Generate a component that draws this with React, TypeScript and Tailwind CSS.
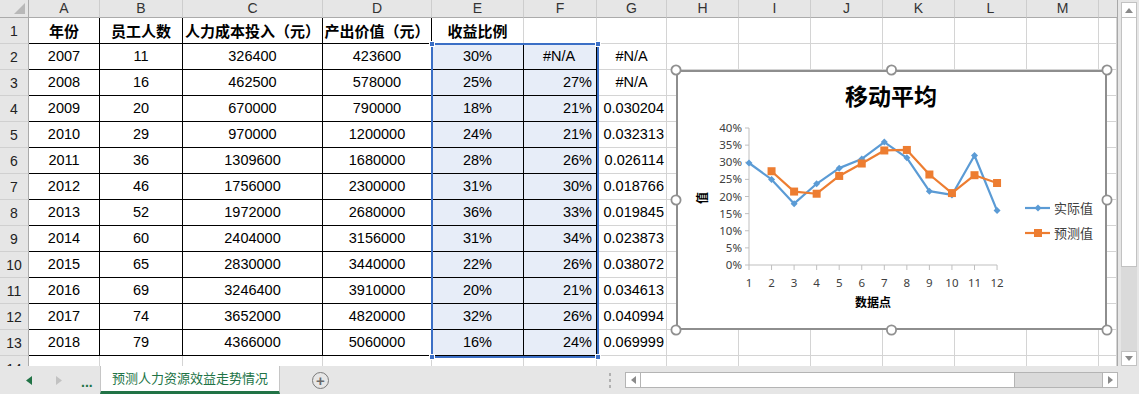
import React from 'react';

const COLS = ['A', 'B', 'C', 'D', 'E', 'F', 'G', 'H', 'I', 'J', 'K', 'L', 'M'];
const HEAD = ['年份', '员工人数', '人力成本投入（元）', '产出价值（元）', '收益比例', '', ''];

const ROWS: string[][] = [
  ['2007', '11', '326400', '423600', '30%', '#N/A', '#N/A'],
  ['2008', '16', '462500', '578000', '25%', '27%', '#N/A'],
  ['2009', '20', '670000', '790000', '18%', '21%', '0.030204'],
  ['2010', '29', '970000', '1200000', '24%', '21%', '0.032313'],
  ['2011', '36', '1309600', '1680000', '28%', '26%', '0.026114'],
  ['2012', '46', '1756000', '2300000', '31%', '30%', '0.018766'],
  ['2013', '52', '1972000', '2680000', '36%', '33%', '0.019845'],
  ['2014', '60', '2404000', '3156000', '31%', '34%', '0.023873'],
  ['2015', '65', '2830000', '3440000', '22%', '26%', '0.038072'],
  ['2016', '69', '3246400', '3910000', '20%', '21%', '0.034613'],
  ['2017', '74', '3652000', '4820000', '32%', '26%', '0.040994'],
  ['2018', '79', '4366000', '5060000', '16%', '24%', '0.069999'],
];

const actual = [0.2978, 0.2497, 0.1791, 0.2371, 0.2828, 0.3098, 0.359, 0.3128, 0.2155, 0.2045, 0.3198, 0.159];
const forecast = [0.2738, 0.2144, 0.2081, 0.26, 0.2963, 0.3344, 0.3359, 0.2642, 0.21, 0.2622, 0.2394];

const cellFont = { fontFamily: "'Liberation Sans', 'Noto Sans CJK SC', sans-serif" };
const cjk = "'Noto Sans', 'Noto Sans CJK SC', sans-serif";

function Chart() {
  const px = (i: number) => 73 + i * 22.55;
  const py = (v: number) => 195 - v * 342.5;
  const aPts = actual.map((v, i) => `${px(i)},${py(v)}`).join(' ');
  const fPts = forecast.map((v, i) => `${px(i + 1)},${py(v)}`).join(' ');
  const handles = [
    [0, 0], [215.5, 0], [431, 0],
    [0, 130], [431, 130],
    [0, 260], [215.5, 260], [431, 260],
  ];
  return (
    <div className="absolute left-[670px] top-[64px] w-[443px] h-[272px]">
      <svg width={443} height={272} style={{ fontFamily: cjk }}>
        <g transform="translate(6,6)">
          <rect x={1} y={1} width={429} height={258} fill="#fff" stroke="#8e8e8e" strokeWidth={2} />
          <text x={215} y={35} textAnchor="middle" fontSize={23} fontWeight={700} fill="#000">移动平均</text>

          {/* y axis */}
          <line x1={73} y1={58} x2={73} y2={195} stroke="#bfbfbf" />
          {[0, 5, 10, 15, 20, 25, 30, 35, 40].map(p => (
            <g key={p}>
              <line x1={69} y1={py(p / 100)} x2={73} y2={py(p / 100)} stroke="#bfbfbf" />
              <text x={66} y={py(p / 100) + 4} textAnchor="end" fontSize={11.5} fill="#404040">{p}%</text>
            </g>
          ))}

          {/* x axis */}
          <line x1={73} y1={195} x2={px(11)} y2={195} stroke="#bfbfbf" />
          {actual.map((_, i) => (
            <g key={i}>
              <line x1={px(i)} y1={195} x2={px(i)} y2={200} stroke="#bfbfbf" />
              <text x={px(i)} y={217} textAnchor="middle" fontSize={11.5} fill="#404040">{i + 1}</text>
            </g>
          ))}
          <text x={197} y={237} textAnchor="middle" fontSize={12} fontWeight={700} fill="#000">数据点</text>
          <text x={0} y={0} transform="translate(31,128) rotate(-90)" textAnchor="middle" fontSize={12} fontWeight={700} fill="#000">值</text>

          {/* series */}
          <polyline points={aPts} fill="none" stroke="#5b9bd5" strokeWidth={2.2} strokeLinejoin="round" />
          {actual.map((v, i) => (
            <polygon key={i} points={`${px(i)},${py(v) - 3.5} ${px(i) + 3.5},${py(v)} ${px(i)},${py(v) + 3.5} ${px(i) - 3.5},${py(v)}`} fill="#5b9bd5" />
          ))}
          <polyline points={fPts} fill="none" stroke="#ed7d31" strokeWidth={2.2} strokeLinejoin="round" />
          {forecast.map((v, i) => (
            <rect key={i} x={px(i + 1) - 4} y={py(v) - 4} width={8} height={8} fill="#ed7d31" />
          ))}

          {/* legend */}
          <line x1={349} y1={138} x2={374} y2={138} stroke="#5b9bd5" strokeWidth={2.2} />
          <polygon points="362,134.5 365.5,138 362,141.5 358.5,138" fill="#5b9bd5" />
          <text x={378} y={143} fontSize={13} fill="#404040">实际值</text>
          <line x1={349} y1={163} x2={374} y2={163} stroke="#ed7d31" strokeWidth={2.2} />
          <rect x={358} y={159} width={8} height={8} fill="#ed7d31" />
          <text x={378} y={168} fontSize={13} fill="#404040">预测值</text>

          {handles.map(([x, y], i) => (
            <circle key={i} cx={x} cy={y} r={4.6} fill="#fff" stroke="#909090" strokeWidth={1.8} />
          ))}
        </g>
      </svg>
    </div>
  );
}

function Cell({ r, c }: { r: number; c: number }) {
  // r: 1..14, c: 1..14 (14 = filler after M)
  let text = '';
  let align = 'justify-center';
  if (r === 1 && c <= 7) text = HEAD[c - 1];
  if (r >= 2 && r <= 13 && c <= 7) {
    text = ROWS[r - 2][c - 1];
    if ((c === 6 || c === 7) && text !== '#N/A') align = 'justify-end';
  }
  const inTable = r >= 2 && r <= 13 && c <= 6;
  const blackR = (r === 1 && c <= 4) || inTable;
  const blackB = (r === 1 && c <= 5) || inTable;
  const selected = r >= 2 && r <= 13 && (c === 5 || c === 6);
  return (
    <div
      className={`flex items-center border-r border-b whitespace-nowrap overflow-hidden ${align} ${
        c === 6 ? 'pl-[2px] pr-[4px]' : 'px-[2px]'
      } ${blackR ? 'border-r-black' : 'border-r-[#d4d4d4]'} ${blackB ? 'border-b-black' : 'border-b-[#d4d4d4]'} ${
        selected ? 'bg-[#e7edf8]' : 'bg-white'
      } ${r === 1 ? 'text-[15px] font-bold leading-none' : 'text-[14.5px]'} text-black`}
      style={r === 1 ? { fontFamily: "'Noto Sans CJK SC', sans-serif" } : cellFont}
    >
      {text}
    </div>
  );
}

export default function App() {
  const rowNums = Array.from({ length: 14 }, (_, i) => i + 1);
  return (
    <div className="w-[1139px] h-[394px] flex flex-col bg-[#e6e6e6] overflow-hidden select-none" style={cellFont}>
      <div className="flex h-[366px]">
        {/* sheet */}
        <div className="relative w-[1118px] h-[366px] overflow-hidden bg-white border-r border-[#a8a8a8]">
          <div className="grid grid-cols-[29px_71px_83px_140px_109px_92px_73px_70px_72px_72px_72px_72px_72px_72px_18px] grid-rows-[18px_26px_26px_26px_26px_26px_26px_26px_26px_26px_26px_26px_26px_26px_26px]">
            {/* corner */}
            <div className="bg-[#e6e6e6] border-r border-b border-r-[#ababab] border-b-[#ababab] flex items-end justify-end pr-[3px] pb-[3px]">
              <svg width={11} height={11}>
                <polygon points="11,0 11,11 0,11" fill="#b8b8b8" />
              </svg>
            </div>
            {COLS.map(l => (
              <div key={l} className="bg-[#e6e6e6] border-r border-b border-r-[#cdcdcd] border-b-[#ababab] flex items-center justify-center text-[14px] text-[#333]">
                {l}
              </div>
            ))}
            <div className="bg-[#e6e6e6] border-b border-b-[#ababab]" />
            {rowNums.map(r => (
              <React.Fragment key={r}>
                <div className="bg-[#e6e6e6] border-r border-b border-r-[#ababab] border-b-[#d0d0d0] flex items-end justify-center pb-[1px] text-[14px] text-[#222]">
                  {r}
                </div>
                {Array.from({ length: 14 }, (_, i) => (
                  <Cell key={i} r={r} c={i + 1} />
                ))}
              </React.Fragment>
            ))}
          </div>

          {/* selection E2:F13 */}
          <div className="absolute left-[431px] top-[43px] w-[168px] h-[315px] border-2 border-[#3b6fc6]">
            <div className="absolute left-[-4px] top-[-4px] w-[6px] h-[6px] bg-[#3b6fc6] border border-white" />
            <div className="absolute right-[-4px] top-[-4px] w-[6px] h-[6px] bg-[#3b6fc6] border border-white" />
            <div className="absolute left-[-4px] bottom-[-4px] w-[6px] h-[6px] bg-[#3b6fc6] border border-white" />
            <div className="absolute right-[-4px] bottom-[-4px] w-[6px] h-[6px] bg-[#3b6fc6] border border-white" />
          </div>

          <Chart />
        </div>

        {/* vertical scrollbar */}
        <div className="w-[21px] flex flex-col pl-[3px] pr-[2px] pt-[2px] bg-[#e6e6e6]">
          <div className="h-[16px] bg-white border border-[#c2c2c2] flex items-center justify-center">
            <svg width={8} height={5}><polygon points="0,5 4,0 8,5" fill="#8a8a8a" /></svg>
          </div>
          <div className="h-[249px] bg-white border border-[#c2c2c2] border-t-0" />
          <div className="flex-1 bg-[#dadada]" />
          <div className="h-[15px] bg-white border border-[#c2c2c2] flex items-center justify-center">
            <svg width={8} height={5}><polygon points="0,0 8,0 4,5" fill="#8a8a8a" /></svg>
          </div>
        </div>
      </div>

      {/* sheet tabs bar */}
      <div className="flex h-[28px] items-stretch bg-[#e6e6e6]">
        <div className="w-[100px] flex items-center">
          <svg width={6} height={9} className="ml-[26px]"><polygon points="6,0 6,9 0,4.5" fill="#217346" /></svg>
          <svg width={6} height={9} className="ml-[24px]"><polygon points="0,0 6,4.5 0,9" fill="#c2c2c2" /></svg>
          <span className="ml-[19px] text-[14px] font-bold text-[#217346] leading-none pt-[4px]">...</span>
        </div>
        <div className="w-[180px] bg-white border-l border-r border-[#c6c6c6] flex items-center justify-center pb-[2px] border-b-[3px] border-b-[#217346]">
          <span className="text-[13px] text-[#217346]" style={{ fontFamily: "'Noto Sans CJK SC', sans-serif" }}>
            预测人力资源效益走势情况
          </span>
        </div>
        <div className="ml-[32px] flex items-center">
          <div className="w-[17px] h-[17px] rounded-full border-[1.5px] border-[#7a7a7a] flex items-center justify-center text-[#6a6a6a] text-[15px] leading-none font-bold">
            +
          </div>
        </div>
        <div className="ml-[280px] flex flex-col justify-center gap-[3px]">
          <div className="w-[2px] h-[3px] bg-[#b0b0b0]" />
          <div className="w-[2px] h-[3px] bg-[#b0b0b0]" />
          <div className="w-[2px] h-[3px] bg-[#b0b0b0]" />
        </div>
        <div className="ml-[14px] flex items-center">
          <div className="w-[493px] h-[16px] flex bg-[#dadada] border border-[#b4b4b4]">
            <div className="w-[15px] bg-white border-r border-[#b4b4b4] flex items-center justify-center">
              <svg width={5} height={8}><polygon points="5,0 5,8 0,4" fill="#8a8a8a" /></svg>
            </div>
            <div className="w-[374px] bg-white border-r border-[#b4b4b4]" />
            <div className="flex-1" />
            <div className="w-[15px] bg-white border-l border-[#b4b4b4] flex items-center justify-center">
              <svg width={5} height={8}><polygon points="0,0 5,4 0,8" fill="#8a8a8a" /></svg>
            </div>
          </div>
        </div>
      </div>
    </div>
  );
}
